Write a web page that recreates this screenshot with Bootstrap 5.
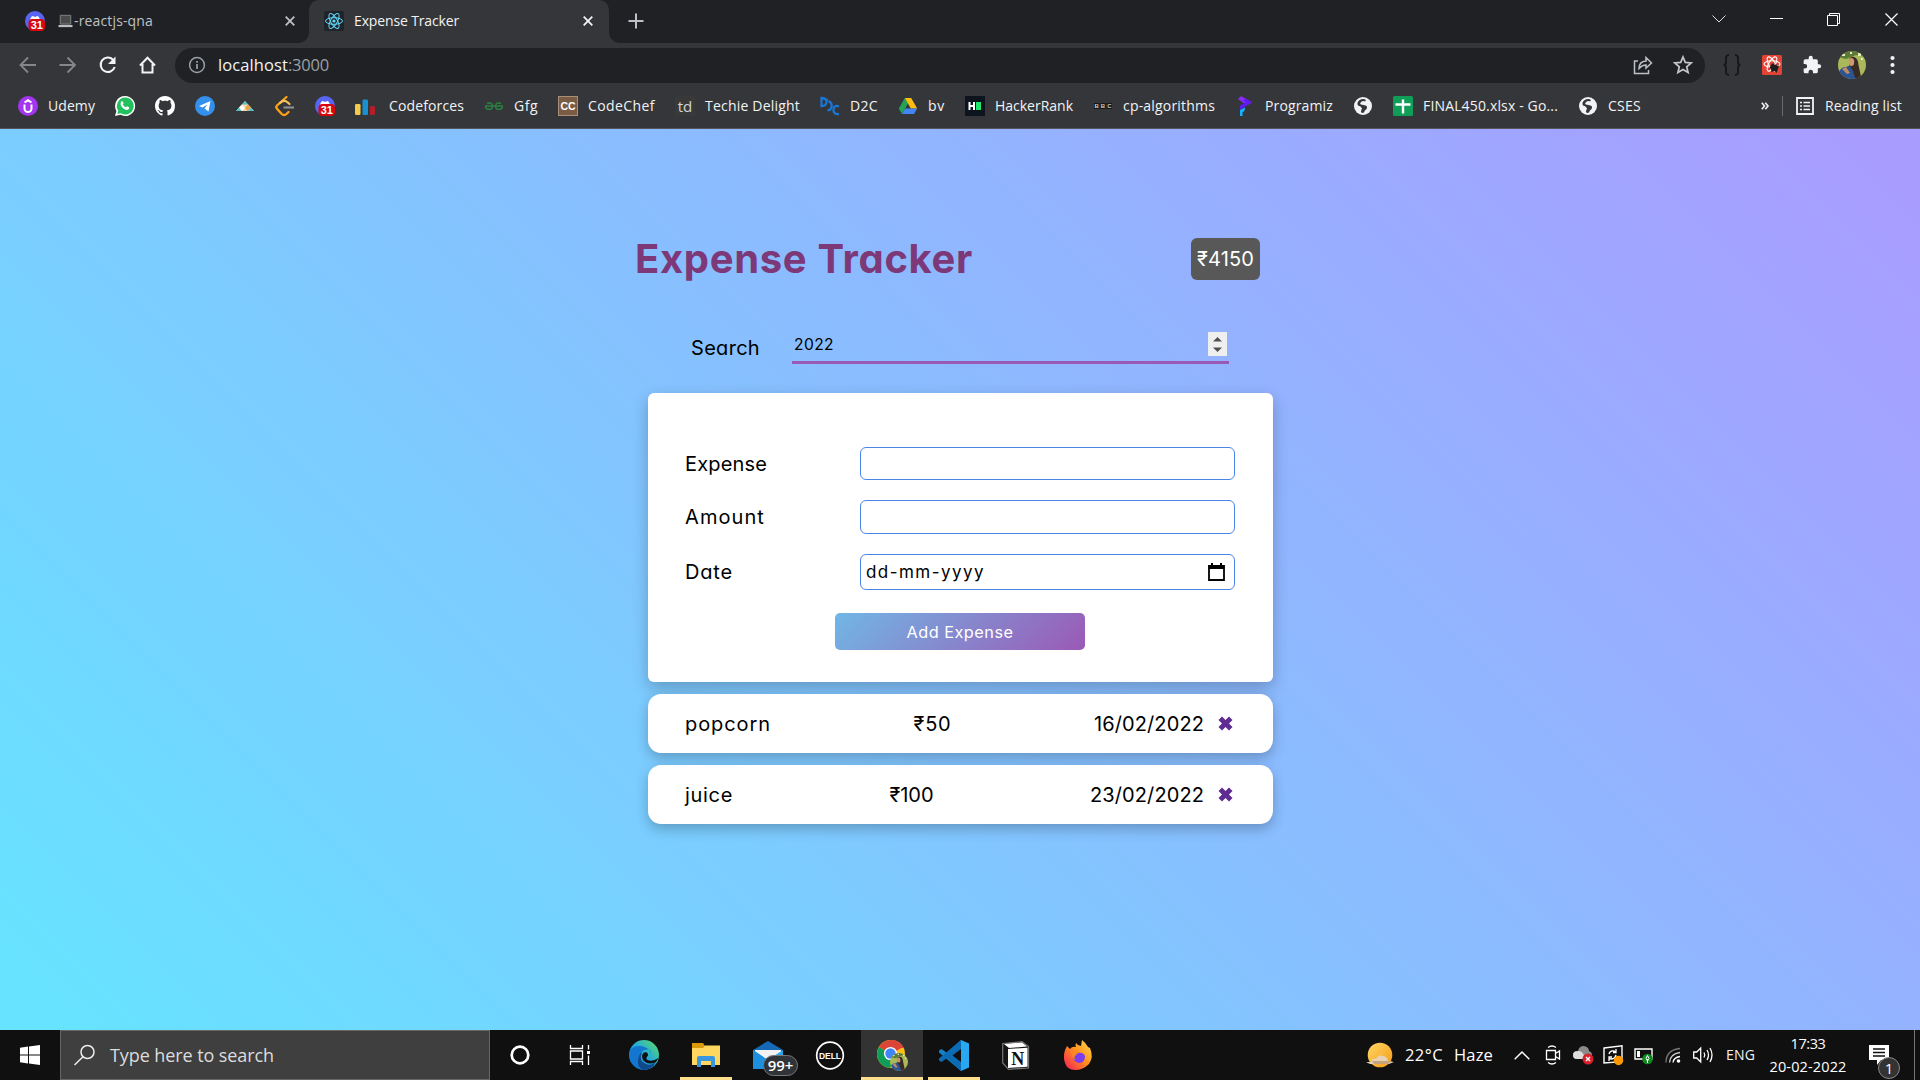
<!DOCTYPE html>
<html lang="en">
<head>
<meta charset="utf-8">
<title>Expense Tracker</title>
<link href="https://cdn.jsdelivr.net/npm/bootstrap@5.3.0/dist/css/bootstrap.min.css" rel="stylesheet">
<style>
html,body{height:1080px;overflow:hidden}
body{font-family:"Open Sans","Noto Sans",sans-serif;font-size:14px;line-height:20px;color:#f1f3f4;width:1920px}
svg{display:block;flex:none;overflow:visible}
.fit{display:inline-block;white-space:nowrap;flex:none}
.tabstrip{height:43px;background:#202124}
.tab-idle{width:309px;padding:0 10px 2px 25px;color:#bdc1c6}
.tab-live{width:300px;padding:0 12px 2px 15px;background:#35363a;border-radius:10px 10px 0 0}
.tab-live::before,.tab-live::after{content:"";position:absolute;bottom:0;width:10px;height:10px}
.tab-live::before{left:-10px;background:radial-gradient(circle at 0 0,#202124 9.5px,#35363a 10px)}
.tab-live::after{right:-10px;background:radial-gradient(circle at 100% 0,#202124 9.5px,#35363a 10px)}
.laptop{margin-left:13px;margin-right:1px}
.livetitle{margin-left:10px}
.plus{margin-left:19px;margin-bottom:1px}
.winbtn{width:57.5px;height:38px}
.toolbar{height:44px;background:#35363a;padding-left:18px;padding-right:18px}
.navset{gap:20px}
.omni{width:1530px;height:35px;border-radius:18px;background:#202124;padding:0 12px 0 13px;margin-left:17px;font-size:16.5px}
.hostn{margin-left:12px}
.starico{margin-left:20px}
.exts{width:180px;margin-left:17px}
.exts svg:nth-child(4){margin:0 -4px}
.dim{color:#9aa0a6}
.marks{height:42px;background:#35363a;border-bottom:1px solid #55565b;padding:0 18px 3px}
.marks .bk{margin-right:20px}
.marks .bk .fit{margin-left:10px;padding-bottom:1px}
.rightset{gap:13px}
.rlist{margin-left:-2px}
.page{height:901px;background:linear-gradient(45deg,#67e2ff 3%,#a89dff 97%);font-family:Inter,"Open Sans",sans-serif;font-feature-settings:"cv11";color:#000;font-size:20px;line-height:30px}
.wrapx{width:625px;margin-left:648px;padding-top:98px}
.head{margin-left:-13px;margin-right:13px;height:64px}
.ttl{font-size:40px;line-height:60px;font-weight:700;color:#7d3878;margin:0}
.total{width:69px;height:42px;border-radius:6px;background:#585858;color:#fff}
.searchrow{padding-left:43px;height:46px;margin-top:31px}
.searchrow>.fit{margin-top:5px}
.yr{width:437px;height:36px;border-bottom:3px solid #9b59b6;margin-left:32px;padding:1px 2px 0 2px;font-size:15.6px;margin-top:6px}
.yr>svg{margin-bottom:2px}
.formcard{height:289px;border-radius:6px;background:#fff;box-shadow:0 6px 16px rgba(0,0,0,.24);margin-top:25px;padding:54px 38px 0 37px}
.rows3{gap:20px}
.fld{width:375px;height:33px;border:1px solid #4a86e8;border-radius:6px;padding:0 9px 0 5px;font-size:17px}
.fld.f2{height:34px}.fld.f3{height:36px}
.addbtn{width:250px;height:37px;border:0;border-radius:5px;background:linear-gradient(135deg,#71b7e6,#9b59b6);color:#fff;font-size:16.3px;padding:0;margin-top:23px}
.entry{height:59px;border-radius:13px;background:#fff;box-shadow:0 5px 13px rgba(0,0,0,.24);padding:0 40px 0 37px;margin-top:12px}
.tail{gap:14px}
.taskbar{height:50px;background:#101010}
.startbtn{width:60px;height:50px}
.find{width:430px;height:50px;background:#3f3f3f;border:1px solid #666;padding-left:12px;font-size:18px;color:#dcdcdc}
.ttype{margin-left:15px}
.apps{margin-left:-1px}
.app{width:62px;height:50px}
.app.run::after{content:"";position:absolute;bottom:0;left:5px;width:52px;height:3px;background:#ffdf8b}
.app.now{background:#333}
.app.now::after{left:0;width:62px}
.pill{position:absolute;left:26px;top:25px;width:35px;height:21px;border:1px solid #777;border-radius:11px;background:#303438;font-size:15px;line-height:19px;font-weight:600;color:#fff;text-align:center}
.tr{width:30px;height:50px}
.temps{font-size:16.5px;color:#fff;gap:11px;margin-left:11px}
.caret{margin-left:21px}
.tray{margin-left:8px}
.lang{margin-left:8px}
.clock{width:92px;line-height:23px;font-size:14.5px;color:#fff;margin-left:7px}
.note{width:51px;height:50px;margin-left:15px}
.cnt{position:absolute;left:9px;top:27px;width:22px;height:22px;border:1px solid #888;border-radius:50%;background:#333;text-align:center;line-height:20px;font-size:15px;color:#fff}
.edgeline{width:1px;height:50px;background:#777;margin-right:5px;margin-left:-6px}
</style>
</head>
<body>
<svg width="0" height="0" class="position-absolute" aria-hidden="true">
<defs>
<symbol id="disc" viewBox="0 0 20 20"><circle cx="10" cy="10" r="10" fill="#5865f2"/><path d="M5 9q1-4 3-4l1 .7h2l1-.7q2 0 3 4z" fill="#fff"/><rect x="3.5" y="8" width="16.5" height="12" rx="4" fill="#d8060e"/><text x="11.8" y="18" font-family="Liberation Sans" font-weight="700" font-size="11" fill="#fff" text-anchor="middle">31</text></symbol>
<symbol id="cross" viewBox="0 0 10 10"><path d="M.7.7 9.3 9.3M9.3.7.7 9.3" stroke="currentColor" stroke-width="1.8"/></symbol>
<symbol id="globe" viewBox="0 0 18 18"><circle cx="9" cy="9" r="9" fill="#f1f3f4"/><path d="M5 3.500q4-2.500 7-.5-.5 2-3 2.200-1 1-.5 2.500l3 .8q2.500 1 1 3.500-2 1-2.500 3.500-2 1-3-.5 0-2 1-3.500-1-2.500-4-3-1.500-2.500 1-5z" fill="#35363a"/><path d="M7 5q2.500-1.500 4-.5-2 1.500-2.500 3.500L6 7z" fill="#f1f3f4"/></symbol>
<linearGradient id="edg" x1="0" y1="1" x2="1" y2="0"><stop offset="0" stop-color="#0b5fb5"/><stop offset=".5" stop-color="#22a7e0"/><stop offset="1" stop-color="#5fe05c"/></linearGradient>
<linearGradient id="fox" x1="1" y1="0" x2="0" y2="1"><stop offset="0" stop-color="#ffe14a"/><stop offset=".5" stop-color="#ff8a1e"/><stop offset="1" stop-color="#f5165d"/></linearGradient>
<linearGradient id="sun" x1="0" y1="0" x2="1" y2="1"><stop offset="0" stop-color="#ffd766"/><stop offset="1" stop-color="#f59a15"/></linearGradient>
<clipPath id="av"><circle cx="14" cy="14" r="14"/></clipPath>
<symbol id="face" viewBox="0 0 28 28"><g clip-path="url(#av)"><rect width="28" height="28" fill="#a9b858"/><path d="M0 0h28v6L18 4 8 8 0 6z" fill="#5a7a35"/><path d="M4 3h3v2H4zM20 2h3v3h-3zM12 1h2v2h-2zM23 7h2v2h-2z" fill="#e6ebc0"/><path d="M0 28q0-12 8-12l5-2 6 3 2 11z" fill="#2b5494"/><path d="M11 9q1.500-4 5-3 4 1 4.500 8l3 14h-6l-3-9-3-4z" fill="#3a2a24"/><ellipse cx="13.500" cy="11" rx="2.700" ry="3.900" fill="#cf9770"/><path d="M4 18l5 5 3-1-4-6z" fill="#c08a63"/></g></symbol>
</defs>
</svg>

<div class="d-flex flex-column">
<!-- tab strip -->
<div class="tabstrip d-flex align-items-center">
  <div class="tab-idle h-100 d-flex align-items-center">
    <svg width="20" height="20"><use href="#disc"/></svg>
    <svg class="laptop" width="15" height="14" viewBox="0 0 16 16"><path d="M2 1.500h12v10H2z" fill="#4b4b4b" stroke="#8a8a8a"/><path d="M0 12.500h16V15H0z" fill="#bdbdbd"/></svg>
    <span class="fit" data-w="79">-reactjs-qna</span>
    <svg class="ms-auto me-1" width="10" height="10"><use href="#cross"/></svg>
  </div>
  <div class="tab-live position-relative h-100 d-flex align-items-center">
    <svg width="20" height="20" viewBox="0 0 20 20"><rect width="20" height="20" rx="2" fill="#20232a"/><g fill="none" stroke="#61dafb" stroke-width="1"><ellipse cx="10" cy="10" rx="8.500" ry="3.300"/><ellipse cx="10" cy="10" rx="8.500" ry="3.300" transform="rotate(60 10 10)"/><ellipse cx="10" cy="10" rx="8.500" ry="3.300" transform="rotate(120 10 10)"/></g><circle cx="10" cy="10" r="1.600" fill="#61dafb"/></svg>
    <span class="fit livetitle" data-w="105">Expense Tracker</span>
    <svg class="ms-auto me-1" width="10" height="10"><use href="#cross"/></svg>
  </div>
  <svg class="plus" width="16" height="16" viewBox="0 0 16 16"><path d="M8 .5v15M.5 8h15" stroke="#bdc1c6" stroke-width="2"/></svg>
  <div class="ms-auto d-flex align-self-start">
    <div class="winbtn d-flex align-items-center justify-content-center"><svg width="14" height="8" viewBox="0 0 14 8"><path d="M.5.5 7 7 13.500.5" fill="none" stroke="#e0e0e0"/></svg></div>
    <div class="winbtn d-flex align-items-center justify-content-center"><svg width="13" height="2"><path d="M0 .5h13" stroke="#fff"/></svg></div>
    <div class="winbtn d-flex align-items-center justify-content-center"><svg width="13" height="13" viewBox="0 0 13 13"><path d="M.5 2.500h10v10H.5zM2.500 2.500v-2h10v10h-2" fill="none" stroke="#fff"/></svg></div>
    <div class="winbtn d-flex align-items-center justify-content-center"><svg width="13" height="13" viewBox="0 0 13 13"><path d="M.5.5l12 12M12.500.5l-12 12" stroke="#fff" stroke-width="1.200"/></svg></div>
  </div>
</div>

<!-- toolbar -->
<div class="toolbar d-flex align-items-center">
  <div class="navset d-flex align-items-center">
    <svg width="20" height="20" viewBox="0 0 20 20"><path d="M18 10H3M10 2.500 2.500 10 10 17.500" fill="none" stroke="#85878b" stroke-width="1.800"/></svg>
    <svg width="20" height="20" viewBox="0 0 20 20"><path d="M1.500 10h15M9.500 2.500 17 10l-7.500 7.500" fill="none" stroke="#85878b" stroke-width="1.800"/></svg>
    <svg width="20" height="20" viewBox="0 0 20 20"><path d="M15 4.700A7.200 7.200 0 1 0 16.700 12" fill="none" stroke="#f1f3f4" stroke-width="2.100"/><path d="M17.500 1.500V9H10z" fill="#f1f3f4"/></svg>
    <svg width="20" height="20" viewBox="0 0 20 20"><path d="M2 10.500 9.500 2.800l7.500 7.700M4.500 9v8.500h10V9" fill="none" stroke="#f1f3f4" stroke-width="2"/></svg>
  </div>
  <div class="omni d-flex align-items-center">
    <svg width="18" height="18" viewBox="0 0 18 18"><circle cx="9" cy="9" r="7.400" fill="none" stroke="#9aa0a6" stroke-width="1.500"/><path d="M9 8v5M9 5v1.700" stroke="#9aa0a6" stroke-width="1.700"/></svg>
    <span class="fit hostn" data-w="70">localhost</span><span class="fit dim" data-w="41">:3000</span>
    <svg class="ms-auto" width="20" height="20" viewBox="0 0 20 20"><path d="M5 6H1.500v12.500h14V15" fill="none" stroke="#bdc1c6" stroke-width="1.500"/><path d="M6 13.500q0-7 7-7.500V2.500L18.500 8 13 13v-3q-4 0-7 3.500z" fill="none" stroke="#bdc1c6" stroke-width="1.500"/></svg>
    <svg class="starico" width="20" height="20" viewBox="0 0 20 20"><path d="M10 2l2.300 5.400 5.900.5-4.500 3.900 1.400 5.700L10 14.400l-5.100 3.100 1.400-5.700-4.500-3.900 5.900-.5z" fill="none" stroke="#c4c7ca" stroke-width="1.700"/></svg>
  </div>
  <div class="exts ms-auto d-flex align-items-center justify-content-between">
    <svg width="20" height="22" viewBox="0 0 20 22"><path d="M7 1Q3.500 1 4 5v3q0 3-2.500 3Q4 11 4 14v3q-.5 4 3 4M13 1q3.500 0 3 4v3q0 3 2.500 3Q16 11 16 14v3q.5 4-3 4" fill="none" stroke="#17181a" stroke-width="2"/></svg>
    <svg width="20" height="20" viewBox="0 0 20 20"><rect width="20" height="20" rx="1.500" fill="#e34234"/><g fill="none" stroke="#fff" stroke-width="1.100"><ellipse cx="10" cy="9" rx="8" ry="3.200"/><ellipse cx="10" cy="9" rx="8" ry="3.200" transform="rotate(60 10 9)"/><ellipse cx="10" cy="9" rx="8" ry="3.200" transform="rotate(120 10 9)"/></g><path d="M9 10l2-2 1.500 2 2-1 .5 2 2-.5-1 3.500-1.500 4-2-2-3 1-.5-3-1.500-1z" fill="#1d1d1d"/></svg>
    <svg width="20" height="20" viewBox="0 0 24 24"><path d="M20.500 11H19V7a2 2 0 0 0-2-2h-4V3.500a2.500 2.500 0 0 0-5 0V5H4a2 2 0 0 0-2 2v3.800h1.500a2.700 2.700 0 0 1 0 5.400H2V20a2 2 0 0 0 2 2h3.800v-1.500a2.700 2.700 0 0 1 5.400 0V22H17a2 2 0 0 0 2-2v-4h1.500a2.500 2.500 0 0 0 0-5z" fill="#f1f3f4"/></svg>
    <svg width="28" height="28"><use href="#face"/></svg>
    <svg width="20" height="18" viewBox="0 0 20 18"><g fill="#f1f3f4"><circle cx="10.500" cy="2" r="2.100"/><circle cx="10.500" cy="9" r="2.100"/><circle cx="10.500" cy="16" r="2.100"/></g></svg>
  </div>
</div>

<!-- bookmarks -->
<div class="marks d-flex align-items-center">
  <div class="bk d-flex align-items-center"><svg width="20" height="20" viewBox="0 0 20 20"><circle cx="10" cy="10" r="10" fill="#a435f0"/><path d="M6.500 8.500v4a3.500 3.500 0 0 0 7 0v-4M6.500 6.500 10 4.300l3.500 2.200" fill="none" stroke="#fff" stroke-width="2"/></svg><span class="fit" data-w="47">Udemy</span></div>
  <div class="bk"><svg width="20" height="20" viewBox="0 0 20 20"><path d="M10 0a10 10 0 1 1-4.600 18.800L0 20l1.400-5A10 10 0 0 1 10 0z" fill="#fff"/><path d="M10 1.500a8.500 8.500 0 1 1-4.300 15.700l-3.400.8 1-3.300A8.500 8.500 0 0 1 10 1.500z" fill="#22c15e"/><path d="M6 6q1.200-1.800 2 0l.6 1.500-.8 1q1 2 3.200 2.800l1-1 2 1q.6 2-2 2.700-4-.3-6.300-5Q5.300 7.500 6 6z" fill="#fff"/></svg></div>
  <div class="bk"><svg width="20" height="20" viewBox="0 0 16 16"><path fill="#fff" d="M8 0C3.580 0 0 3.580 0 8c0 3.540 2.290 6.530 5.470 7.590.4.070.55-.17.55-.38v-1.490c-2.010.37-2.530-.49-2.690-.94-.09-.23-.48-.94-.82-1.130-.28-.15-.68-.52-.01-.53.63-.01 1.080.58 1.230.82.72 1.210 1.870.87 2.330.66.070-.52.28-.87.51-1.070-1.780-.2-3.640-.89-3.640-3.950 0-.87.310-1.590.82-2.150-.08-.2-.36-1.020.08-2.120 0 0 .67-.21 2.200.82.640-.18 1.320-.27 2-.27s1.360.09 2 .27c1.530-1.040 2.200-.82 2.200-.82.440 1.100.16 1.920.08 2.120.51.560.82 1.270.82 2.150 0 3.070-1.870 3.750-3.650 3.950.29.250.54.730.54 1.480v2.200c0 .21.150.46.550.38A8 8 0 0 0 16 8c0-4.420-3.580-8-8-8z"/></svg></div>
  <div class="bk"><svg width="20" height="20" viewBox="0 0 20 20"><circle cx="10" cy="10" r="10" fill="#3390ec"/><path d="M4 10 15.500 5 13.500 15.500 9.500 12.500 12.500 8.500 7.500 11.500z" fill="#fff"/></svg></div>
  <div class="bk"><svg width="20" height="20" viewBox="0 0 20 20"><path d="M1 15 10 5l9 10z" fill="#f7d7a5"/><path d="M10 5l3 3.500H7zM4 11.500 7 15H1zM16 11.500 19 15h-6z" fill="#4cc3c9"/><path d="M7 8.500 10 12l-3 3-3-3.500z" fill="#fff"/><path d="M13 8.500 10 12l2.500 3 3.500-3.500z" fill="#e9a345"/></svg></div>
  <div class="bk"><svg width="20" height="20" viewBox="0 0 20 20"><path d="M11.500 1 2 9.500q-1.500 1.500 0 3.200l4.500 5q2.500 2.500 5 .3l2-2" fill="none" stroke="#ffa116" stroke-width="2.300" stroke-linecap="round"/><path d="M5 7q4-4 8-.3l1.500 1.300" fill="none" stroke="#f8c15a" stroke-width="2.200" stroke-linecap="round"/><path d="M8.500 11.500H19" stroke="#8e8e8e" stroke-width="2.200"/></svg></div>
  <div class="bk"><svg width="20" height="20"><use href="#disc"/></svg></div>
  <div class="bk d-flex align-items-center"><svg width="20" height="20" viewBox="0 0 20 20"><rect x="0" y="8" width="5.500" height="11" rx="1.300" fill="#f7c948"/><rect x="7.500" y="3.500" width="5.500" height="15.500" rx="1.300" fill="#1a8fd1"/><rect x="15" y="10" width="5" height="9" rx="1.300" fill="#b3202a"/></svg><span class="fit ps-1" data-w="75">Codeforces</span></div>
  <div class="bk d-flex align-items-center"><svg width="20" height="20" viewBox="0 0 20 20"><path d="M1 10h18M3 7.500q5-2 5.500 2.500 0 4.500-5.500 3-1.500-1-1.500-2.500M17 7.500q-5-2-5.500 2.500 0 4.500 5.500 3 1.500-1 1.500-2.500" fill="none" stroke="#2a7f3f" stroke-width="1.600"/></svg><span class="fit" data-w="24">Gfg</span></div>
  <div class="bk d-flex align-items-center"><svg width="20" height="20" viewBox="0 0 20 20"><rect width="20" height="20" fill="#a89078"/><rect x="1" y="1" width="18" height="18" fill="#7a5c44"/><text x="10" y="14" font-family="Liberation Sans" font-weight="700" font-size="10.500" fill="#fff" text-anchor="middle">CC</text></svg><span class="fit" data-w="67">CodeChef</span></div>
  <div class="bk d-flex align-items-center"><svg width="20" height="20" viewBox="0 0 20 20"><rect width="20" height="20" fill="#393939"/><text x="10" y="16" font-family="Open Sans" font-size="15" fill="#d5d5d5" text-anchor="middle">td</text></svg><span class="fit" data-w="95">Techie Delight</span></div>
  <div class="bk d-flex align-items-center"><svg width="20" height="20" viewBox="0 0 20 20"><g fill="none" stroke="#1976d2" stroke-width="2.300"><path d="M1.500 2v8q5 0 5-4t-5-4zM8.500 5q4 2 3 6t-4 3M19 10.500q-5-2-5.500 3t5.500 4.500M1 2l7 2"/></g></svg><span class="fit" data-w="28">D2C</span></div>
  <div class="bk d-flex align-items-center"><svg width="20" height="20" viewBox="0 0 20 20"><path d="M6.800 2 10 7.500 4 18 .8 12.500z" fill="#23a455"/><path d="M6.800 2h6.400L19.200 12.500h-6.400z" fill="#fdbd10"/><path d="M4 18l3.200-5.500h12L16 18z" fill="#4285f4"/></svg><span class="fit" data-w="17">bv</span></div>
  <div class="bk d-flex align-items-center"><svg width="20" height="20" viewBox="0 0 20 20"><rect width="20" height="20" fill="#0e141e"/><path d="M4.500 6v8M9 6v8M4.500 10H9" stroke="#fff" stroke-width="2"/><path d="M11 6h5v8h-5z" fill="#1ee86c"/></svg><span class="fit" data-w="78">HackerRank</span></div>
  <div class="bk d-flex align-items-center"><svg width="20" height="20" viewBox="0 0 20 20"><path d="M1 7h5.500v6H1zM7.300 7h5.500v6H7.300zM13.600 7H19v6h-5.400z" fill="#171717"/><g font-family="Liberation Sans" font-weight="700" font-size="6" fill="#ccc" text-anchor="middle"><text x="3.700" y="12">B</text><text x="10" y="12">B</text><text x="16.300" y="12">C</text></g></svg><span class="fit" data-w="92">cp-algorithms</span></div>
  <div class="bk d-flex align-items-center"><svg width="20" height="20" viewBox="0 0 20 20"><path d="M6 0 17 6.500 12 9.500 3 3z" fill="#8a2bf5"/><path d="M17 6 5 14v-4.500l6-3L8 4.500l3-2z" fill="#5f19f2"/><path d="M5 14l5-2.500q0 4-2.500 5V20H5z" fill="#14b1ff"/></svg><span class="fit" data-w="68">Programiz</span></div>
  <div class="bk"><svg width="20" height="20" viewBox="-1 -1 20 20"><use href="#globe" width="18" height="18"/></svg></div>
  <div class="bk d-flex align-items-center"><svg width="20" height="20" viewBox="0 0 20 20"><rect width="20" height="20" rx="1.500" fill="#0f9d58"/><path d="M10 3.500v14M2.500 8.500h15" stroke="#fff" stroke-width="2.400"/></svg><span class="fit" data-w="135">FINAL450.xlsx - Go...</span></div>
  <div class="bk d-flex align-items-center"><svg width="20" height="20" viewBox="-1 -1 20 20"><use href="#globe" width="18" height="18"/></svg><span class="fit" data-w="33">CSES</span></div>
  <div class="rightset ms-auto d-flex align-items-center">
    <svg width="8" height="8" viewBox="0 0 8 8"><path d="M.8.8 3.500 4 .8 7.200M4.300.8 7 4 4.300 7.200" fill="none" stroke="#f1f3f4" stroke-width="1.600"/></svg>
    <svg width="1" height="20"><path d="M.5 0v20" stroke="#6a6b70"/></svg>
    <svg width="18" height="18" viewBox="0 0 18 18"><path d="M1 1h16v16H1z" fill="none" stroke="#f1f3f4" stroke-width="1.800"/><path d="M4 5.500h2M4 9h2M4 12.500h2M7.500 5.500H14M7.500 9H14M7.500 12.500H14" stroke="#f1f3f4" stroke-width="1.700"/></svg>
    <span class="fit rlist" data-w="77">Reading list</span>
  </div>
</div>

<!-- page -->
<main class="page">
  <div class="wrapx">
    <div class="head d-flex align-items-center justify-content-between">
      <h1 class="ttl"><span class="fit" data-w="338">Expense Tracker</span></h1>
      <div class="total d-flex align-items-center justify-content-center"><span class="fit" data-w="57">₹4150</span></div>
    </div>
    <div class="searchrow d-flex align-items-center">
      <span class="fit" data-w="69">Search</span>
      <div class="yr d-flex align-items-center justify-content-between align-self-start">
        <span class="fit" data-w="40">2022</span>
        <svg width="19" height="24" viewBox="0 0 19 24"><rect width="19" height="24" fill="#efefef"/><path d="M5 9.500 9.500 5l4.500 4.500zM5 15.500 9.500 20l4.500-4.500z" fill="#505050"/></svg>
      </div>
    </div>
    <div class="formcard">
      <div class="rows3 d-flex flex-column">
        <div class="d-flex align-items-center justify-content-between"><span class="fit" data-w="82">Expense</span><div class="fld"></div></div>
        <div class="d-flex align-items-center justify-content-between"><span class="fit" data-w="80">Amount</span><div class="fld f2"></div></div>
        <div class="d-flex align-items-center justify-content-between"><span class="fit" data-w="48">Date</span><div class="fld f3 d-flex align-items-center justify-content-between"><span class="fit" data-w="119">dd-mm-yyyy</span><svg width="17" height="18" viewBox="0 0 17 18"><path d="M1 3h15v14H1z" fill="none" stroke="#000" stroke-width="1.800"/><path d="M.5 2.500h16V6H.5zM3 0h2v3H3zM12 0h2v3h-2z"/></svg></div></div>
      </div>
      <button class="addbtn d-block mx-auto" type="button"><span class="fit" data-w="107">Add Expense</span></button>
    </div>
    <div class="entry d-flex align-items-center justify-content-between">
      <span class="fit" data-w="86">popcorn</span><span class="fit" data-w="38">₹50</span>
      <span class="d-flex align-items-center tail"><span class="fit" data-w="110">16/02/2022</span><svg width="15" height="15" viewBox="0 0 15 15"><path d="M4 .5 7.500 4 11 .5l3.500 3.500L11 7.500l3.500 3.500L11 14.500 7.500 11 4 14.500.5 11 4 7.500.5 4z" fill="#5f2c91"/></svg></span>
    </div>
    <div class="entry d-flex align-items-center justify-content-between">
      <span class="fit" data-w="48">juice</span><span class="fit" data-w="44">₹100</span>
      <span class="d-flex align-items-center tail"><span class="fit" data-w="114">23/02/2022</span><svg width="15" height="15" viewBox="0 0 15 15"><path d="M4 .5 7.500 4 11 .5l3.500 3.500L11 7.500l3.500 3.500L11 14.500 7.500 11 4 14.500.5 11 4 7.500.5 4z" fill="#5f2c91"/></svg></span>
    </div>
  </div>
</main>

<!-- taskbar -->
<footer class="taskbar d-flex align-items-center">
  <div class="startbtn d-flex align-items-center justify-content-center"><svg width="20" height="20" viewBox="0 0 20 20"><path d="M0 2.800 8 1.600V9.500H0zM9 1.500 20 0v9.500H9zM0 10.500h8v8L0 17.300zM9 10.500h11V20L9 18.500z" fill="#fff"/></svg></div>
  <div class="find d-flex align-items-center"><svg width="22" height="22" viewBox="0 0 22 22"><circle cx="14.500" cy="8" r="6.500" fill="none" stroke="#eee" stroke-width="1.500"/><path d="M10 12.800 1.500 21" stroke="#eee" stroke-width="1.500"/></svg><span class="fit ttype" data-w="164">Type here to search</span></div>
  <div class="apps d-flex">
    <div class="app d-flex align-items-center justify-content-center"><svg width="20" height="20"><circle cx="10" cy="10" r="8.300" fill="none" stroke="#fff" stroke-width="2.700"/></svg></div>
    <div class="app d-flex align-items-center justify-content-center pe-1"><svg width="20" height="20" viewBox="0 0 20 20"><path d="M.5 0v3.500h12V0M.5 20v-3.500h12V20M.5 6h12v8H.5zM18.500 0v4.500M18.500 10.500V20" fill="none" stroke="#fff" stroke-width="1.300"/><path d="M17 6h3v3h-3z" fill="#fff"/></svg></div>
    <div class="app d-flex align-items-center justify-content-center"><svg width="30" height="30" viewBox="0 0 30 30"><circle cx="15" cy="15" r="15" fill="url(#edg)"/><path d="M0 14Q2 5 12 6q8 1 10 8 0-6-7-4-5 3-3 10 3 7 13 5-4 5-11 5Q2 28 0 14z" fill="#1377cf"/><path d="M13 12q-4 9 4 12 5 2 10-2-4 8-13 8-6-3-5-10 1-6 4-8z" fill="#114a8b"/><path d="M15 12.500q4-1.500 4 3-3 3-.5 4.500 5 2 11-2l-2.500 4q-7 3.500-12-1-4-5 0-8.500z" fill="#101010"/></svg></div>
    <div class="app run position-relative d-flex align-items-center justify-content-center"><svg width="28" height="24" viewBox="0 0 28 24"><path d="M0 0h11l2 3h15v6H0z" fill="#dc9a08"/><path d="M0 5h11l2-2.500h15V22H0z" fill="#ffd75e"/><path d="M5 24V15q0-2 2-2h14q2 0 2 2v9h-4v-6H9v6z" fill="#3a96dd"/></svg></div>
    <div class="app position-relative d-flex align-items-center justify-content-center"><svg width="30" height="28" viewBox="0 0 30 28"><path d="M0 9 15 0l15 9v19H0z" fill="#1669b6"/><path d="M2 9h26v9H2z" fill="#f2f2f2"/><path d="M0 9l15 10L30 9v19H0z" fill="#28a8ea"/><path d="M0 9l19 13-8 6H0z" fill="#1d8fdc"/></svg><span class="pill">99+</span></div>
    <div class="app d-flex align-items-center justify-content-center"><svg width="29" height="29" viewBox="0 0 29 29"><circle cx="14" cy="14.500" r="13.300" fill="none" stroke="#fff" stroke-width="1.700"/><text x="14" y="18" font-family="Liberation Sans" font-weight="700" font-size="9.500" textLength="22" lengthAdjust="spacingAndGlyphs" fill="#fff" text-anchor="middle">DELL</text></svg></div>
    <div class="app run now position-relative d-flex align-items-center justify-content-center"><svg width="30" height="32" viewBox="0 0 30 32"><circle cx="14" cy="15" r="14" fill="#fbc116"/><path d="M14 15 1.900 8A14 14 0 0 1 26.100 8z" fill="#db4437"/><path d="M14 1A14 14 0 0 1 26.500 9H14z" fill="#db4437"/><path d="M1.900 8A14 14 0 0 0 13 29l6-11-5-3z" fill="#0f9d58"/><circle cx="13.500" cy="14.500" r="6.600" fill="#fff"/><circle cx="13.500" cy="14.500" r="5.200" fill="#4285f4"/><use href="#face" x="13" y="14" width="18" height="18"/></svg></div>
    <div class="app run position-relative d-flex align-items-center justify-content-center"><svg width="30" height="31" viewBox="0 0 30 31"><path d="M22 0 8 13 2.500 9 0 10.500v2L22 31z" fill="#1380c7"/><path d="M22 31 8 18l-5.500 4L0 20.500v-2L22 0z" fill="#0b6cb3"/><path d="M22 0l8 3.500v24L22 31z" fill="#29a8f2"/><path d="M22 9v13l-8.500-6.500z" fill="#101010"/></svg></div>
    <div class="app d-flex align-items-center justify-content-center"><svg width="28" height="29" viewBox="0 0 28 29"><path d="M.7 2.500 20 .7l6.500 4.800v21.500L6.500 28.300.7 22z" fill="#151515" stroke="#777" stroke-width="1.200"/><path d="M2 3 20 1.500l5 4L7 7z" fill="#fff"/><path d="M6 8l19.500-1.300v19L6 27z" fill="#fff"/><text x="15.700" y="23.500" font-family="Liberation Serif" font-weight="700" font-size="18" fill="#111" text-anchor="middle">N</text></svg></div>
    <div class="app d-flex align-items-center justify-content-center"><svg width="28" height="30" viewBox="0 0 28 30"><path d="M3 6l3 3q2-3 6-2-1-2 0-4 2 3 5 3l1-6q4 3 6 7l2 1q4 9-1 16-6 6-14 6T1 23Q-2 14 3 6z" fill="url(#fox)"/><path d="M8 12q3 2 6 1 5-1 7 3 0 7-6 7-7-1-7-11z" fill="#7b3df0"/><path d="M7 10q4 1 8 2l-3 3q-3 2 0 5-5-2-5-10z" fill="#ff8427"/></svg></div>
  </div>
  <div class="ms-auto d-flex align-items-center">
    <svg width="28" height="26" viewBox="0 0 28 26"><circle cx="14" cy="13" r="12.300" fill="url(#sun)"/><path d="M0 20h5q1-4 5-3 2-5 8-3 4 2 4 5l6 1-5 2H4z" fill="#e6d2b5"/><path d="M6 19h20l-4 3H8z" fill="#c6a57d"/></svg>
    <div class="temps d-flex"><span class="fit" data-w="38">22°C</span><span class="fit" data-w="39">Haze</span></div>
    <svg class="caret" width="16" height="9" viewBox="0 0 16 9"><path d="M.7 8.300 8 1l7.300 7.300" fill="none" stroke="#fff" stroke-width="1.500"/></svg>
    <div class="tray d-flex">
      <div class="tr d-flex align-items-center justify-content-center"><svg width="16" height="20" viewBox="0 0 16 20"><path d="M1.500 5.500h9v9h-9zM10.500 8.500 14.500 6v8l-4-2.500M3 2.500q4-3 8 0M3 17.500q4 3 8 0" fill="none" stroke="#fff" stroke-width="1.300"/></svg></div>
      <div class="tr d-flex align-items-center justify-content-center"><svg width="20" height="18" viewBox="0 0 20 18"><path d="M4 13q-4 0-4-4t5-4q1-5 6-5 5 1 5 5 3 1 3 4t-3 4z" fill="#8b8b8b"/><path d="M4 13q-4 0-4-4t5-4q5 0 6 5v3z" fill="#ddd"/><circle cx="15" cy="13" r="5.500" fill="#d9202b"/><path d="M13 11l4 4M17 11l-4 4" stroke="#fff" stroke-width="1.400"/></svg></div>
      <div class="tr d-flex align-items-center justify-content-center"><svg width="20" height="20" viewBox="0 0 20 20"><path d="M1 3 19 .7v16L1 18z" fill="none" stroke="#fff" stroke-width="1.400"/><path d="M6 9q1-4 5-3l2 1M13 4v3.500h-3M13 10q-1 4-5 4l-2-1M6 16v-4h3" fill="none" stroke="#fff" stroke-width="1.300"/><circle cx="15.500" cy="15.500" r="4.700" fill="#ff9800"/></svg></div>
      <div class="tr d-flex align-items-center justify-content-center"><svg width="19" height="18" viewBox="0 0 19 18"><path d="M1 3h17v10H1z" fill="none" stroke="#fff" stroke-width="1.400"/><path d="M3 5h3v6H3z" fill="#fff"/><circle cx="13.500" cy="13" r="5.300" fill="#0f8a1f"/><path d="M13.500 9.500q3 3 0 5.500-3-2.500 0-5.500zM13.500 13v4" fill="none" stroke="#fff"/></svg></div>
      <div class="tr d-flex align-items-center justify-content-center"><svg width="16" height="16" viewBox="0 0 16 16"><g fill="none" stroke-width="1.300"><path d="M1 15.500Q1 3 15 1.500" stroke="#777"/><path d="M4.500 15.500Q5 7 15 5.500" stroke="#ccc"/><path d="M8 15.500q.5-5 7-6" stroke="#fff"/></g><circle cx="13.500" cy="14" r="1.800" fill="#fff"/></svg></div>
      <div class="tr d-flex align-items-center justify-content-center"><svg width="20" height="18" viewBox="0 0 20 18"><path d="M.7 6h3l4-4v14l-4-4h-3zM11 6.500q1.500 2.500 0 5M14 4q3 5 0 10M17 2q4 7 0 14" fill="none" stroke="#fff" stroke-width="1.300"/></svg></div>
    </div>
    <span class="fit lang" data-w="29">ENG</span>
    <div class="clock d-flex flex-column align-items-center"><span class="fit" data-w="35">17:33</span><span class="fit" data-w="77">20-02-2022</span></div>
    <div class="note position-relative d-flex align-items-center"><svg width="20" height="20" viewBox="0 0 20 20"><path d="M0 0h20v15h-8l-4 5v-5H0z" fill="#fff"/><path d="M4 4h12M4 7.500h12M4 11h12" stroke="#111" stroke-width="1.300"/></svg><span class="cnt">1</span></div>
    <div class="edgeline"></div>
  </div>
</footer>
</div>
<script src="https://cdn.jsdelivr.net/npm/bootstrap@5.3.0/dist/js/bootstrap.bundle.min.js"></script>
<script>
// Spread each label over its nominal width by tracking
document.querySelectorAll('.fit').forEach(function (el) {
  var w = +el.dataset.w, r = document.createRange();
  r.selectNodeContents(el);
  var n = r.getBoundingClientRect().width;
  el.style.letterSpacing = ((w - n) / el.textContent.length).toFixed(3) + 'px';
});
</script>
</body>
</html>
